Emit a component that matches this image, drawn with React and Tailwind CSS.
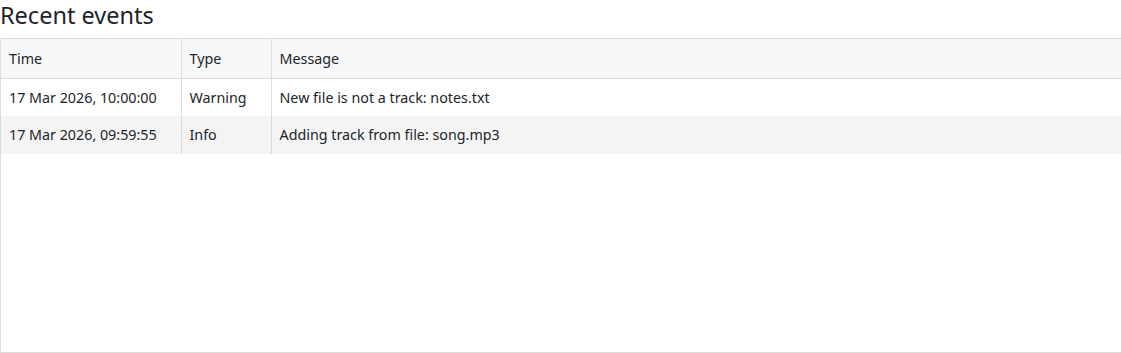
export default function App() {
  const rows = [
    { time: "17 Mar 2026, 10:00:00", type: "Warning", msg: "New file is not a track: notes.txt" },
    { time: "17 Mar 2026, 09:59:55", type: "Info", msg: "Adding track from file: song.mp3" },
  ];
  return (
    <div className="w-[1121px] h-[353px] overflow-hidden bg-white text-[#212529]" style={{ fontFamily: '"Noto Sans", "Open Sans", sans-serif' }}>
      <h2 className="text-[23.5px] leading-[30px] m-0 h-[38px]">Recent events</h2>
      <div className="w-[1140px] h-[315px] border border-[#dcdcdc] overflow-hidden">
        <table className="w-full border-collapse text-[14.3px] table-fixed">
          <thead>
            <tr className="bg-[#f7f8fa] h-[39px] border-b border-[#dcdcdc]">
              <th className="w-[180px] text-left font-normal px-2 border-r border-[#dcdcdc]">Time</th>
              <th className="w-[90px] text-left font-normal px-2 border-r border-[#dcdcdc]">Type</th>
              <th className="text-left font-normal px-2">Message</th>
            </tr>
          </thead>
          <tbody>
            {rows.map((r, i) => (
              <tr key={i} className={`h-[38px] ${i % 2 === 1 ? "bg-[#f4f4f4]" : "bg-white"}`}>
                <td className="px-2 border-r border-[#dcdcdc]">{r.time}</td>
                <td className="px-2 border-r border-[#dcdcdc]">{r.type}</td>
                <td className="px-2">{r.msg}</td>
              </tr>
            ))}
          </tbody>
        </table>
      </div>
    </div>
  );
}
